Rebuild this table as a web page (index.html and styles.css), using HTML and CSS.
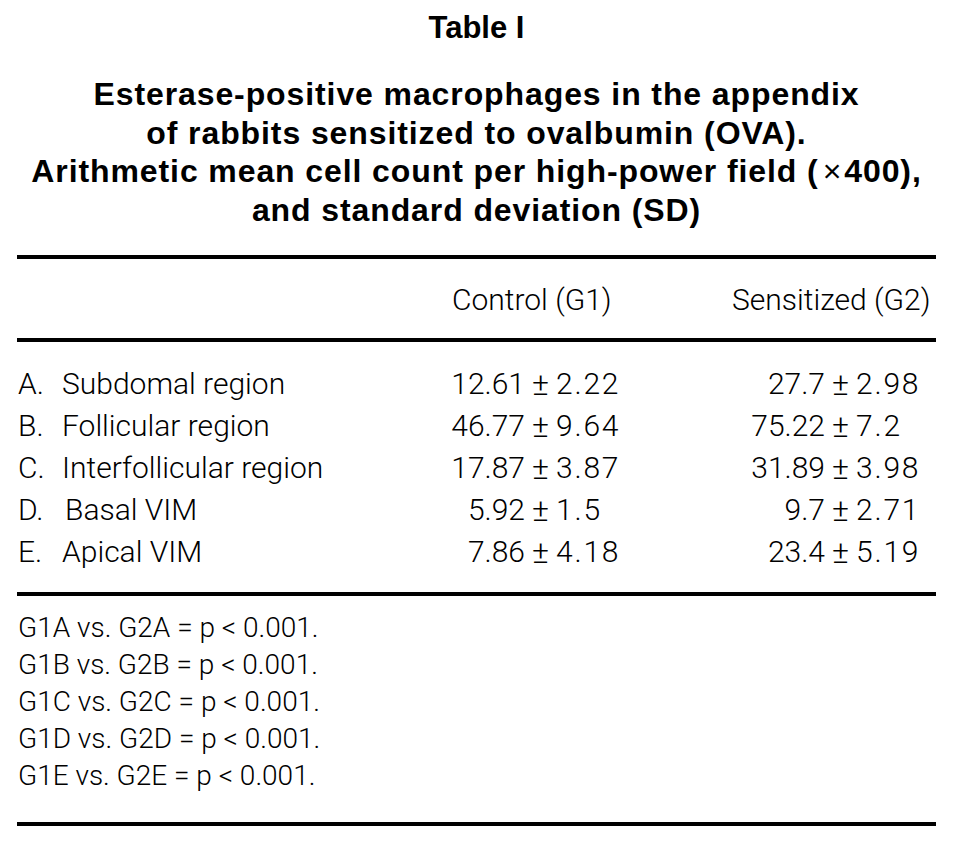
FILE: index.html
```html
<!DOCTYPE html>
<html lang="en">
<head>
<meta charset="utf-8">
<title>Table I</title>
<link rel="stylesheet" href="styles.css">
</head>
<body>
<div class="page">
  <h1 class="title">Table I</h1>
  <p class="caption">Esterase-positive macrophages in the appendix<br>of rabbits sensitized to ovalbumin (OVA).<br>Arithmetic mean cell count per high-power field (<span class="times">×</span>400),<br>and standard deviation (SD)</p>

  <div class="rule"></div>
  <div class="row head">
    <div class="label"></div>
    <div class="colhead c2">Control (G1)</div>
    <div class="colhead c3">Sensitized (G2)</div>
  </div>
  <div class="rule"></div>

  <div class="body">
    <div class="row">
      <div class="label"><span class="key">A.</span>Subdomal region</div>
      <div class="val c2"><span class="l">12.61</span><span class="pm">±</span><span class="r">2.22</span></div>
      <div class="val c3"><span class="l">27.7</span><span class="pm">±</span><span class="r">2.98</span></div>
    </div>
    <div class="row">
      <div class="label"><span class="key">B.</span>Follicular region</div>
      <div class="val c2"><span class="l">46.77</span><span class="pm">±</span><span class="r">9.64</span></div>
      <div class="val c3"><span class="l">75.22</span><span class="pm">±</span><span class="r">7.2</span></div>
    </div>
    <div class="row">
      <div class="label"><span class="key">C.</span>Interfollicular region</div>
      <div class="val c2"><span class="l">17.87</span><span class="pm">±</span><span class="r">3.87</span></div>
      <div class="val c3"><span class="l">31.89</span><span class="pm">±</span><span class="r">3.98</span></div>
    </div>
    <div class="row">
      <div class="label"><span class="key keyd">D.</span>Basal VIM</div>
      <div class="val c2"><span class="l">5.92</span><span class="pm">±</span><span class="r">1.5</span></div>
      <div class="val c3"><span class="l">9.7</span><span class="pm">±</span><span class="r">2.71</span></div>
    </div>
    <div class="row">
      <div class="label"><span class="key">E.</span>Apical VIM</div>
      <div class="val c2"><span class="l">7.86</span><span class="pm">±</span><span class="r">4.18</span></div>
      <div class="val c3"><span class="l">23.4</span><span class="pm">±</span><span class="r">5.19</span></div>
    </div>
  </div>
  <div class="rule"></div>

  <div class="notes">
    <p>G1A vs. G2A = p &lt; 0.001.</p>
    <p>G1B vs. G2B = p &lt; 0.001.</p>
    <p>G1C vs. G2C = p &lt; 0.001.</p>
    <p>G1D vs. G2D = p &lt; 0.001.</p>
    <p>G1E vs. G2E = p &lt; 0.001.</p>
  </div>
  <div class="rule"></div>
</div>
</body>
</html>
```

FILE: styles.css
```css
html, body {
  margin: 0;
  padding: 0;
  background: #ffffff;
  color: #000000;
}

.page {
  width: 919px;
  margin-left: 17px;
  padding-top: 9px;
}

.title {
  margin: 0;
  font-family: "Liberation Sans", Arial, sans-serif;
  font-weight: 700;
  font-size: 31px;
  line-height: 38px;
  text-align: center;
}

.caption {
  margin: 28px 0 25px;
  font-family: "Liberation Sans", Arial, sans-serif;
  font-weight: 700;
  font-size: 32px;
  letter-spacing: 0.9px;
  line-height: 38.7px;
  text-align: center;
}

.caption .times {
  font-weight: 400;
  padding: 0 2px 0 4px;
}

.rule {
  height: 4px;
  background: #000000;
}

.row {
  display: grid;
  grid-template-columns: 420px 280px 1fr;
  font-family: Roboto, "Liberation Sans", sans-serif;
  font-weight: 300;
  font-size: 30px;
  line-height: 42px;
}

.head {
  padding: 20px 0 17px;
}

.colhead {
  padding-left: 15px;
  white-space: nowrap;
}

.body {
  padding: 21px 0 19px;
}

.label {
  padding-left: 1px;
  white-space: nowrap;
}

.key {
  display: inline-block;
  width: 44px;
}

.keyd {
  width: 47px;
}

.val {
  display: flex;
  white-space: nowrap;
}

.val .l {
  text-align: right;
}

.val .r {
  letter-spacing: 1.8px;
}

.c2 .l {
  width: 88px;
}

.c3 .l {
  width: 108px;
}

.pm {
  padding: 0 7px;
  font-size: 32px;
}

.notes {
  padding: 13px 0 28px;
  font-family: Roboto, "Liberation Sans", sans-serif;
  font-weight: 300;
  font-size: 28px;
  line-height: 37px;
}

.notes p {
  margin: 0;
  padding-left: 1px;
}
```
